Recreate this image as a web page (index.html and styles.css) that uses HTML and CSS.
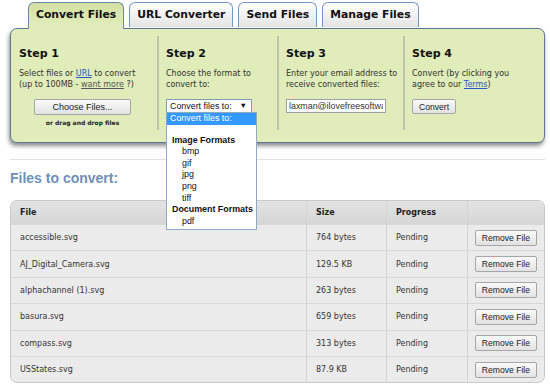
FILE: index.html
```html
<!DOCTYPE html>
<html lang="en">
<head>
<meta charset="UTF-8">
<meta name="viewport" content="width=device-width, initial-scale=1.0">
<title>Online File Converter</title>
<link rel="stylesheet" href="styles.css">
</head>
<body>

<div class="page">
    <div class="tabs">
        <div class="tab active">Convert Files</div>
        <div class="tab">URL Converter</div>
        <div class="tab">Send Files</div>
        <div class="tab">Manage Files</div>
    </div>

    <div class="panel">
        <div class="step step-1">
            <h3>Step 1</h3>
            <p>Select files or <a href="#" class="link">URL</a> to convert<br>(up to 100MB - <a href="#" class="link-muted">want more</a> ?)</p>
            <div class="upload">
                <button class="btn btn-wide">Choose Files...</button>
                <div class="drop-hint">or drag and drop files</div>
            </div>
        </div>
        <div class="step step-2">
            <h3>Step 2</h3>
            <p>Choose the format to<br>convert to:</p>
            <div class="select-wrap">
                <div class="select">Convert files to: <span class="caret">&#9660;</span></div>
                <ul class="options">
                    <li class="selected">Convert files to:</li>
                    <li class="blank"></li>
                    <li class="group">Image Formats</li>
                    <li class="item">bmp</li>
                    <li class="item">gif</li>
                    <li class="item">jpg</li>
                    <li class="item">png</li>
                    <li class="item">tiff</li>
                    <li class="group">Document Formats</li>
                    <li class="item">pdf</li>
                </ul>
            </div>
        </div>
        <div class="step step-3">
            <h3>Step 3</h3>
            <p>Enter your email address to<br>receive converted files:</p>
            <input type="text" class="email" value="laxman@ilovefreesoftware.com">
        </div>
        <div class="step step-4">
            <h3>Step 4</h3>
            <p>Convert (by clicking you<br>agree to our <a href="#" class="link">Terms</a>)</p>
            <button class="btn btn-block">Convert</button>
        </div>
    </div>

    <div class="divider"></div>

    <h2 class="files-title">Files to convert:</h2>

    <table class="files">
        <thead>
            <tr>
                <th class="col-file">File</th>
                <th class="col-size">Size</th>
                <th class="col-progress">Progress</th>
                <th class="col-action"></th>
            </tr>
        </thead>
        <tbody>
            <tr><td>accessible.svg</td><td>764 bytes</td><td>Pending</td><td class="col-action"><button class="btn">Remove File</button></td></tr>
            <tr><td>AJ_Digital_Camera.svg</td><td>129.5 KB</td><td>Pending</td><td class="col-action"><button class="btn">Remove File</button></td></tr>
            <tr><td>alphachannel (1).svg</td><td>263 bytes</td><td>Pending</td><td class="col-action"><button class="btn">Remove File</button></td></tr>
            <tr><td>basura.svg</td><td>659 bytes</td><td>Pending</td><td class="col-action"><button class="btn">Remove File</button></td></tr>
            <tr><td>compass.svg</td><td>313 bytes</td><td>Pending</td><td class="col-action"><button class="btn">Remove File</button></td></tr>
            <tr><td>USStates.svg</td><td>87.9 KB</td><td>Pending</td><td class="col-action"><button class="btn">Remove File</button></td></tr>
        </tbody>
    </table>
</div>

</body>
</html>
```

FILE: styles.css
```css
/* Page */
body {
    margin: 0;
    background: #fff;
    color: #333;
    font-family: "DejaVu Sans", Verdana, sans-serif;
}
.page {
    padding: 2px 5px 0 10px;
}

/* Tabs */
.tabs {
    display: flex;
    gap: 5px;
    padding-left: 18px;
    position: relative;
    z-index: 2;
}
.tab {
    height: 24px;
    line-height: 24px;
    padding: 0 7px;
    border: 1px solid #7896c2;
    border-bottom: none;
    border-radius: 6px 6px 0 0;
    background: linear-gradient(#ffffff, #e4e4e4);
    font-weight: bold;
    font-size: 10.8px;
    color: #111;
}
.tab.active {
    height: 26px;
    margin-bottom: -1px;
    border-color: #6d85a6;
    background: linear-gradient(#d3e0a1, #e0ecb9 80%);
}

/* Steps panel */
.panel {
    display: flex;
    height: 113px;
    width: 533px;
    border: 1px solid #5f7796;
    border-radius: 7px;
    background: #e0ecb9;
    box-shadow: -1px 3px 4px rgba(0, 0, 0, 0.45);
    position: relative;
    z-index: 1;
}
.step {
    margin: 7px 0 12px;
    padding: 11px 0 0 7px;
}
.step + .step {
    border-left: 2px solid #bcc4aa;
}
.step-1 { width: 138px; padding-left: 8px; }
.step-2 { width: 111px; }
.step-3 { width: 117px; }
.step-4 { flex: 1; }
.step h3 {
    margin: 0 0 8px;
    font-size: 11px;
    line-height: 13px;
    color: #111;
}
.step p {
    margin: 0 0 9px;
    font-size: 8px;
    line-height: 11px;
    color: #333;
}
.link {
    color: #2b55c8;
}
.link-muted {
    color: #555;
}

.btn {
    height: 16px;
    padding: 0 6px;
    border: 1px solid #a6a6a6;
    border-radius: 2px;
    background: linear-gradient(#fafafa, #e2e2e2);
    font-family: "Liberation Sans", Arial, sans-serif;
    font-size: 8.6px;
    color: #222;
}
.btn-block {
    display: block;
    height: 15px;
}
.upload {
    width: 97px;
    padding-left: 15px;
}
.btn-wide {
    display: block;
    width: 97px;
    font-size: 9px;
}
.drop-hint {
    margin-top: 4px;
    text-align: center;
    font-size: 6px;
    line-height: 8px;
    font-weight: bold;
    color: #222;
}

/* Format select with open list */
.select-wrap {
    position: relative;
}
.select {
    width: 81px;
    height: 12px;
    padding-left: 3px;
    border: 1px solid #7f9db9;
    background: #fff;
    font-family: "Liberation Sans", Arial, sans-serif;
    font-size: 8.9px;
    line-height: 12px;
    color: #111;
    position: relative;
}
.caret {
    position: absolute;
    right: 4px;
    top: 0;
    font-size: 7.5px;
}
.options {
    position: absolute;
    left: 0;
    top: 13px;
    width: 89px;
    margin: 0;
    padding: 0 0 2px;
    list-style: none;
    border: 1px solid #8fa8c4;
    background: #fff;
    font-family: "Liberation Sans", Arial, sans-serif;
    font-size: 8.9px;
    line-height: 11.6px;
    color: #111;
    z-index: 5;
}
.options li {
    height: 11.6px;
    padding-left: 15px;
}
.options .selected {
    padding-left: 3px;
    background: #3399ff;
    color: #fff;
}
.options .blank {
    height: 10px;
}
.options .group {
    padding-left: 5px;
    font-weight: bold;
}

.email {
    display: block;
    width: 100px;
    height: 14px;
    box-sizing: border-box;
    padding: 0 2px;
    border: 1px solid #9aa0a6;
    font-family: "Liberation Sans", Arial, sans-serif;
    font-size: 8.9px;
    color: #333;
}

/* Files list */
.divider {
    height: 1px;
    margin-top: 16px;
    background: #e2e2e2;
}
.files-title {
    margin: 10px 0 14px;
    font-family: "Liberation Sans", Arial, sans-serif;
    font-size: 14px;
    line-height: 16px;
    color: #7090b6;
}
.files {
    width: 535px;
    border-collapse: separate;
    border-spacing: 0;
    border: 1px solid #c9c9c9;
    border-radius: 7px;
    background: #ebebeb;
    font-size: 8px;
    color: #333;
    overflow: hidden;
}
.files th,
.files td {
    padding: 0 0 0 9px;
    text-align: left;
    border-left: 1px solid #d4d4d4;
    border-top: 1px solid #d8d8d8;
}
.files th:first-child,
.files td:first-child {
    border-left: none;
}
.files th {
    height: 23px;
    border-top: none;
    background: linear-gradient(#e2e2e2, #d7d7d7);
    font-weight: bold;
    color: #222;
}
.files th:first-child {
    border-top-left-radius: 6px;
}
.files th:last-child {
    border-top-right-radius: 6px;
}
.files td {
    height: 25.4px;
}
.col-file { width: 286px; }
.col-size { width: 70px; }
.col-progress { width: 71px; }
.files td.col-action {
    padding: 0 7px 0 0;
    text-align: right;
}
```
